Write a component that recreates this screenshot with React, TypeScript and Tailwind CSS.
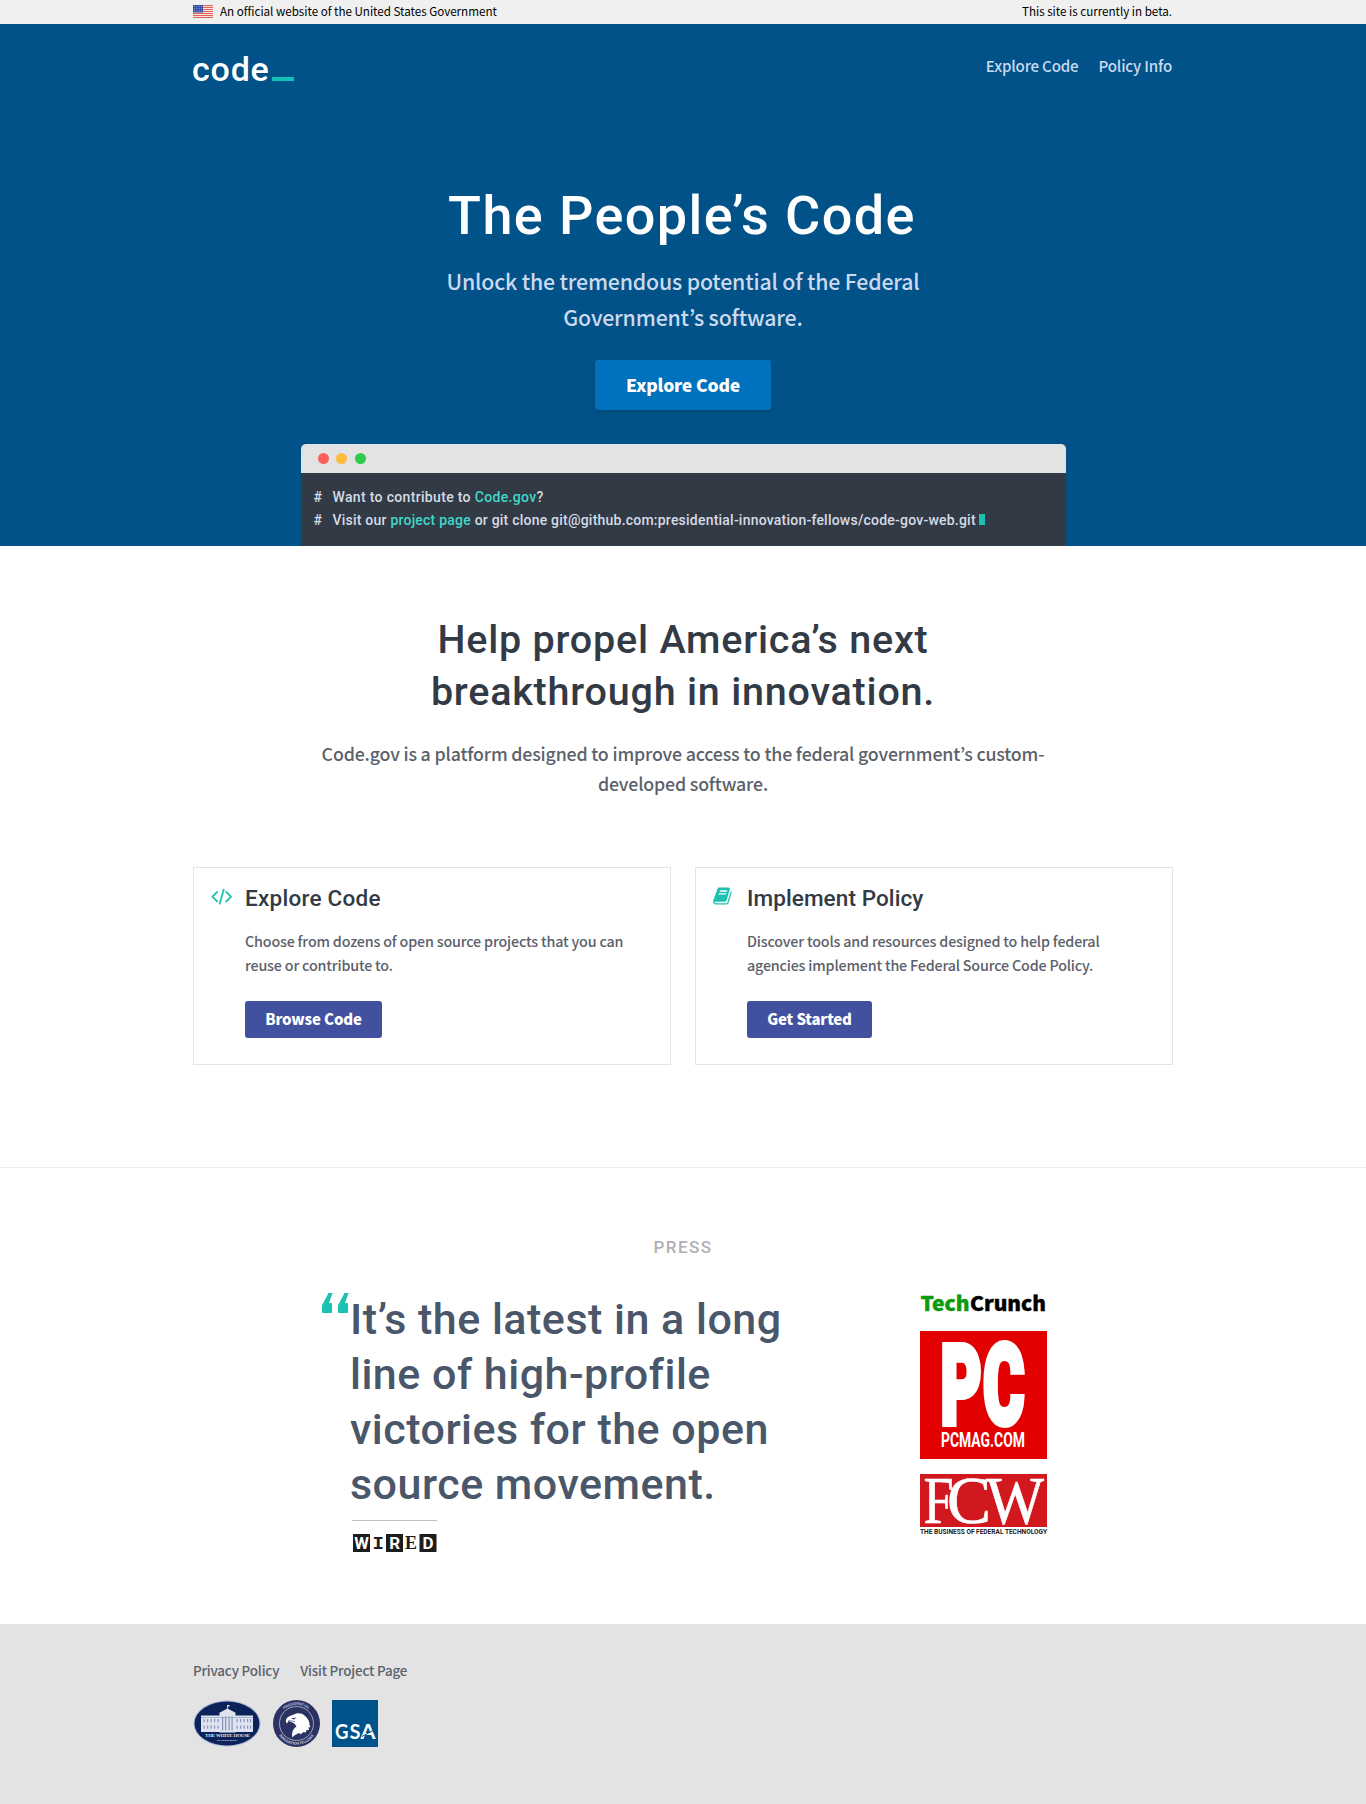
import React from 'react';

const SANS = "font-['Noto_Sans_CJK_KR',sans-serif] font-medium tracking-[-0.011em]";
const HEAD = "font-['Roboto',sans-serif] font-medium";

function Flag() {
  return (
    <svg width="20" height="13" viewBox="0 0 20 13">
      <rect width="20" height="13" fill="#fbe3e0" />
      {[0, 2, 4, 6, 8, 10, 12].map((y) => (
        <rect key={y} y={y} width="20" height="1" fill="#e0605a" />
      ))}
      <rect width="10" height="7.5" fill="#3c50a8" />
      {[1.2, 3.4, 5.6].map((y) =>
        [1.2, 3.5, 5.8, 8.1].map((x) => <rect key={`${x}-${y}`} x={x} y={y} width="0.8" height="0.8" fill="#b7c0e6" />),
      )}
    </svg>
  );
}

function CodeIcon() {
  return (
    <svg width="21.4" height="20" viewBox="0 0 1920 1792" fill="#1cc1b1" stroke="#1cc1b1" strokeWidth="40">
      <path d="M617 1399l-50 50q-10 10-23 10t-23-10l-466-466q-10-10-10-23t10-23l466-466q10-10 23-10t23 10l50 50q10 10 10 23t-10 23l-393 393 393 393q10 10 10 23t-10 23zm591-1067l-373 1291q-4 13-15.5 19.5t-23.5 2.5l-62-17q-13-4-19.5-15.5t-2.5-24.5l373-1291q4-13 15.5-19.5t23.5-2.5l62 17q13 4 19.5 15.5t2.5 24.5zm657 651l-466 466q-10 10-23 10t-23-10l-50-50q-10-10-10-23t10-23l393-393-393-393q-10-10-10-23t10-23l50-50q10-10 23-10t23 10l466 466q10 10 10 23t-10 23z" />
    </svg>
  );
}

function BookIcon() {
  return (
    <svg width="18.8" height="20" viewBox="0 0 1664 1792" fill="#1cc1b1">
      <path d="M1639 478q40 57 18 129l-275 906q-19 64-76.5 107.5t-122.5 43.5h-923q-77 0-148.5-53.5t-99.5-131.5q-24-67-2-127 0-4 3-27t4-37q1-8-3-21.5t-3-19.5q2-11 8-21t16.5-23.5 16.5-23.5q23-38 45-91.5t30-91.5q3-10 .5-30t-.5-28q3-11 17-28t17-23q21-36 42-92t25-90q1-9-2.5-32t.5-28q4-13 22-30.5t22-22.5q19-26 42.5-84.5t27.5-96.5q1-8-3-25.5t-2-26.5q2-8 9-18t18-23 17-21q8-12 16.5-30.5t15-35 16-36 19.5-32 26.5-23.5 36-11.5 47.5 5.5l-1 3q38-9 51-9h761q74 0 114 56t18 130l-274 906q-36 119-71.5 153.5t-128.5 34.5h-869q-27 0-38 15-11 16-1 43 24 70 144 70h923q29 0 56-15.5t35-41.5l300-987q7-22 5-57 38 15 59 43zm-1064 2q-4 13 2 22.5t20 9.5h608q13 0 25.5-9.5t16.5-22.5l21-64q4-13-2-22.5t-20-9.5h-608q-13 0-25.5 9.5t-16.5 22.5zm-83 256q-4 13 2 22.5t20 9.5h608q13 0 25.5-9.5t16.5-22.5l21-64q4-13-2-22.5t-20-9.5h-608q-13 0-25.5 9.5t-16.5 22.5z" />
    </svg>
  );
}

function QuoteMark() {
  return (
    <svg width="27" height="21" viewBox="0 0 27 21" fill="#1cc1b1">
      <path d="M6.5 0H10.5L7 10H9Q10 10 10 11V19Q10 20 9 20H1Q0 20 0 19V13.5Q0 12.5 0.4 11.6Z" />
      <path d="M22.5 0H26.5L23 10H25Q26 10 26 11V19Q26 20 25 20H17Q16 20 16 19V13.5Q16 12.5 16.4 11.6Z" />
    </svg>
  );
}

function Wired() {
  return (
    <svg width="84" height="18" viewBox="0 0 84 18" className="overflow-visible" textAnchor="middle" fontWeight="700">
      <g fill="#1d1d1d">
        <rect width="17" height="18" />
        <rect x="33" width="17" height="18" />
        <rect x="66.5" width="17" height="18" />
      </g>
      <g fontFamily="Roboto" fontSize="17" fill="#fff">
        <text x="8.5" y="15" textLength="14.5" lengthAdjust="spacingAndGlyphs">W</text>
        <text x="41.5" y="15">R</text>
        <text x="75" y="15">D</text>
      </g>
      <g fontFamily="Liberation Mono" fontSize="19" fill="#1d1d1d">
        <text x="25" y="15">I</text>
        <text x="58" y="15" fontFamily="Liberation Serif" fontSize="18">E</text>
      </g>
    </svg>
  );
}

function TechCrunch() {
  return (
    <svg width="127" height="20" viewBox="0 0 127 20" className="overflow-visible" fontFamily="Noto Sans CJK KR" fontWeight="900" fontSize="20">
      <text x="0.5" y="17" fill="#0a9a0a" stroke="#0a9a0a" strokeWidth="0.4" textLength="49" lengthAdjust="spacingAndGlyphs">Tech</text>
      <text x="50" y="17" fill="#000" stroke="#000" strokeWidth="0.4" textLength="76" lengthAdjust="spacingAndGlyphs">Crunch</text>
    </svg>
  );
}

function PcMag() {
  return (
    <svg width="127" height="128" viewBox="0 0 127 128" fontFamily="Roboto" fill="#fff">
      <rect width="127" height="128" fill="#e20000" />
      <g fontWeight="900" stroke="#fff" strokeWidth="6">
        <text transform="translate(20.5 92.5) scale(0.57 1)" fontSize="111">P</text>
        <text transform="translate(63 92.5) scale(0.57 1)" fontSize="111">C</text>
      </g>
      <text x="21" y="115.5" fontWeight="700" fontSize="20" textLength="84" lengthAdjust="spacingAndGlyphs">PCMAG.COM</text>
    </svg>
  );
}

function Fcw() {
  return (
    <svg width="127" height="61" viewBox="0 0 127 61" className="overflow-visible">
      <rect width="127" height="53" fill="#d2181f" />
      <g fontFamily="Liberation Serif" fontSize="67" fill="#fff" stroke="#fff" strokeWidth="0.7">
        <text x="3.5" y="48.5" textLength="30" lengthAdjust="spacingAndGlyphs">F</text>
        <text x="27" y="48.5" textLength="44" lengthAdjust="spacingAndGlyphs">C</text>
        <text x="66" y="48.5" textLength="58" lengthAdjust="spacingAndGlyphs">W</text>
      </g>
      <text x="0" y="60" fontFamily="Roboto" fontWeight="700" fontSize="6.8" fill="#222" textLength="127" lengthAdjust="spacingAndGlyphs">
        THE BUSINESS OF FEDERAL TECHNOLOGY
      </text>
    </svg>
  );
}

function WhiteHouseSeal() {
  return (
    <svg width="68" height="47" viewBox="0 0 68 47">
      <ellipse cx="34" cy="23.5" rx="33.5" ry="23" fill="#a9b4d2" />
      <ellipse cx="34" cy="23.5" rx="32.5" ry="22" fill="#0b2358" />
      <g fill="#dfe3ef">
        <rect x="8" y="15.5" width="52" height="16.5" />
        <rect x="26.5" y="13" width="16" height="19.5" />
        <path d="M26 13L34.5 8.5L43 13Z" />
        <rect x="34" y="5" width="0.8" height="4" />
        <rect x="34" y="5" width="2.5" height="1.5" />
      </g>
      <g fill="#8794ba">
        {[10.5, 14, 17.5, 21, 24.5, 43.5, 47, 50.5, 54, 57].map((x) => (
          <g key={x}>
            <rect x={x} y="19" width="1.2" height="3.2" />
            <rect x={x} y="25.5" width="1.2" height="3.2" />
          </g>
        ))}
        {[29, 32, 35.5, 38.5].map((x) => (
          <rect key={x} x={x} y="16.5" width="1.2" height="14" />
        ))}
        <rect x="8" y="17" width="52" height="0.6" />
      </g>
      <g fill="#dfe3ef" textAnchor="middle" fontFamily="Liberation Serif" fontWeight="700">
        <text x="34.5" y="37" fontSize="4.8" textLength="45" lengthAdjust="spacingAndGlyphs">THE WHITE HOUSE</text>
        <text x="34" y="40.8" fontSize="2.8" textLength="20" lengthAdjust="spacingAndGlyphs">WASHINGTON</text>
      </g>
    </svg>
  );
}

function FellowsSeal() {
  return (
    <svg width="47" height="47" viewBox="0 0 47 47">
      <defs>
        <path id="seal-top" d="M5 23.5A18.5 18.5 0 0 1 42 23.5" />
        <path id="seal-bottom" d="M2.2 23.5A21.3 21.3 0 0 0 44.8 23.5" />
      </defs>
      <circle cx="23.5" cy="23.5" r="23.5" fill="#2b3160" />
      <circle cx="23.5" cy="23.5" r="17" fill="none" stroke="#aab0cc" strokeWidth="0.9" />
      <g fill="#b9bfd8" fontFamily="Roboto" fontWeight="700" fontSize="3.9" letterSpacing="0" textAnchor="middle">
        <text><textPath href="#seal-top" startOffset="50%">PRESIDENTIAL</textPath></text>
        <text><textPath href="#seal-bottom" startOffset="50%">INNOVATION FELLOWS</textPath></text>
      </g>
      <path
        fill="#fff"
        d="M13 19.5C15 15.5 19 15.5 21 14.5C24 12.7 29 13 31.5 15.5C35 18.5 37 22 36.5 25L37.5 27L35.5 27.5L36 30L33.5 30L33 32.5L30.5 32L27.5 34.5L26.5 33C23.5 34 21 35 19.5 37.5C18.5 33 19.5 29 23.5 26.5C22.5 24.5 21.5 23.5 19.5 22.5L15.5 21L14 23.5C13 22.5 12.6 21 13 19.5Z"
      />
      <path d="M18 18.5L23.5 17.5L21 19.5Z" fill="#2b3160" />
      <path d="M15.5 20.5L22 21.5" stroke="#2b3160" strokeWidth="0.6" />
    </svg>
  );
}

function GsaLogo() {
  return (
    <svg width="46" height="47" viewBox="0 0 46 47">
      <rect width="46" height="47" fill="#00528a" />
      <g fontFamily="Lato" fontWeight="700" fontSize="21" fill="#fff" letterSpacing="0">
        <text x="3" y="38.5" textLength="13.5" lengthAdjust="spacingAndGlyphs">G</text>
        <text x="17.5" y="38.5" textLength="11" lengthAdjust="spacingAndGlyphs">S</text>
        <text x="28.5" y="38.5" textLength="15" lengthAdjust="spacingAndGlyphs">A</text>
      </g>
      <path d="M30 36.5L42 30" stroke="#00528a" strokeWidth="1" />
    </svg>
  );
}

interface CardProps {
  icon: React.ReactNode;
  title: string;
  titleClass: string;
  lines: string[];
  action: string;
  actionClass: string;
}

function Card({ icon, title, titleClass, lines, action, actionClass }: CardProps) {
  return (
    <div className="flex h-[198px] w-[478px] border border-[#e4e4e4] pt-[15px]">
      <div className="w-[51px] shrink-0 pt-[2.5px] pl-[17px]">{icon}</div>
      <div>
        <h3 className={`${HEAD} text-[22.5px] leading-[30px] text-[#323a45] ${titleClass}`}>{title}</h3>
        <p className="mt-4 text-[14.3px] leading-6 whitespace-nowrap text-[#5b616b]">
          {lines[0]}
          <br />
          {lines[1]}
        </p>
        <a className={`mt-6 flex h-[37px] items-center justify-center rounded-[3px] bg-[#4250a0] pb-px text-[15px] leading-[36px] font-black text-white ${actionClass}`}>
          {action}
        </a>
      </div>
    </div>
  );
}

export default function App() {
  return (
    <div className={`${SANS} h-[1804px] w-[1366px] overflow-hidden bg-white`}>
      <div className="h-6 bg-[#f0f0f0]">
        <div className="mx-auto flex w-[980px] items-start justify-between text-[11.65px] leading-[22px] font-normal tracking-[-0.02px] text-black">
          <div className="flex">
            <div className="mr-[7px] pt-[5px]"><Flag /></div>
            <span>An official website of the United States Government</span>
          </div>
          <span className="pr-px">This site is currently in beta.</span>
        </div>
      </div>

      <header className="h-[522px] bg-[#005288] pt-[25px]">
        <div className="mx-auto flex h-10 w-[980px] justify-between">
          <div className="flex">
            <span className={`${HEAD} -ml-px w-[80px] text-[34px] leading-10 tracking-[0.8px] text-white`}>code</span>
            <span className="mt-[28px] h-1 w-[22px] bg-[#12c0b8]" />
          </div>
          <nav className="mt-1 flex gap-5 pr-px text-[15.1px] leading-6 text-[#c9daf0]">
            <a>Explore Code</a>
            <a>Policy Info</a>
          </nav>
        </div>
        <div className="mt-[95px] flex flex-col items-center text-center">
          <h1 className={`${HEAD} pr-[2px] text-[54px] leading-[64px] tracking-[1.4px] text-white`}>The People’s Code</h1>
          <p className="mt-[15px] text-[21.3px] leading-9 text-[#ccd9ee]">
            Unlock the tremendous potential of the Federal
            <br />
            Government’s software.
          </p>
          <a className="mt-[25px] h-[50px] w-[176px] rounded-[3px] bg-[#0071bc] text-[17.5px] leading-[50px] font-black text-white shadow-[0_2px_4px_rgba(0,0,0,0.15)]">
            Explore Code
          </a>
          <div className={`${HEAD} mt-[34px] w-[765px] overflow-hidden rounded-t-[5px] text-left`}>
            <div className="flex h-[29px] items-center gap-[7.5px] bg-[#e3e3e3] pl-[17px]">
              <span className="size-[11px] rounded-full bg-[#fb605c]" />
              <span className="size-[11px] rounded-full bg-[#fdbc40]" />
              <span className="size-[11px] rounded-full bg-[#2fcb49]" />
            </div>
            <div className="h-[73px] bg-[#323a45] pt-[13px] pl-[13px] text-[14px] leading-[23px] whitespace-nowrap text-[#d6dbe6]">
              <div className="flex tracking-[0.33px]">
                <span className="w-[19px]">#</span>
                <span>
                  Want to contribute to <a className="text-[#40d8c8]">Code.gov</a>?
                </span>
              </div>
              <div className="flex tracking-[0.22px]">
                <span className="w-[19px]">#</span>
                <span>
                  Visit our <a className="text-[#40d8c8]">project page</a> or git clone git@github.com:presidential-innovation-fellows/code-gov-web.git
                </span>
                <span className="mt-[5px] ml-[3px] h-[11px] w-1.5 bg-[#1cc1b1]" />
              </div>
            </div>
          </div>
        </div>
      </header>

      <section className="flex h-[621px] flex-col items-center pt-[68px] text-center">
        <h2 className={`${HEAD} text-[39.5px] leading-[52px] tracking-[0.78px] text-[#323a45]`}>
          Help propel America’s next
          <br />
          breakthrough in innovation.
        </h2>
        <p className="mt-5 text-[17.8px] leading-[30px] text-[#5b616b]">
          Code.gov is a platform designed to improve access to the federal government’s custom-
          <br />
          developed software.
        </p>
        <div className="mt-[69px] flex w-[980px] justify-between text-left">
          <Card
            icon={<CodeIcon />}
            title="Explore Code"
            titleClass="tracking-[0.25px]"
            lines={['Choose from dozens of open source projects that you can', 'reuse or contribute to.']}
            action="Browse Code"
            actionClass="w-[137px]"
          />
          <Card
            icon={<BookIcon />}
            title="Implement Policy"
            titleClass="tracking-[0.1px]"
            lines={['Discover tools and resources designed to help federal', 'agencies implement the Federal Source Code Policy.']}
            action="Get Started"
            actionClass="w-[125px]"
          />
        </div>
      </section>

      <section className="h-[457px] border-t border-[#eeeeee] pt-[67px]">
        <h4 className={`${HEAD} text-center text-[17px] leading-6 tracking-[1.5px] text-[#aeb0b5]`}>PRESS</h4>
        <div className="mx-auto mt-[33px] flex w-[728px]">
          <div className="w-[31px] pt-px pl-[3px]"><QuoteMark /></div>
          <div className="w-[571px]">
            <blockquote className={`${HEAD} text-[43px] leading-[55px] tracking-[0.5px] whitespace-nowrap text-[#4a5669]`}>
              It’s the latest in a long
              <br />
              line of high-profile
              <br />
              victories for the open
              <br />
              source movement.
            </blockquote>
            <div className="mt-2 ml-[2px] w-[85px] border-t border-[#c0c0c0] pt-[13px] pl-px">
              <Wired />
            </div>
          </div>
          <div className="flex w-[127px] shrink-0 flex-col pt-[2px] tracking-normal">
            <TechCrunch />
            <div className="mt-[17px]"><PcMag /></div>
            <div className="mt-[15px]"><Fcw /></div>
          </div>
        </div>
      </section>

      <footer className="h-[180px] bg-[#e3e3e3] pt-[34px]">
        <div className="mx-auto w-[980px]">
          <div className="flex gap-[21px] text-[13.4px] leading-6 text-[#5b616b]">
            <a>Privacy Policy</a>
            <a>Visit Project Page</a>
          </div>
          <div className="mt-[18px] flex">
            <WhiteHouseSeal />
            <div className="mx-3"><FellowsSeal /></div>
            <GsaLogo />
          </div>
        </div>
      </footer>
    </div>
  );
}
